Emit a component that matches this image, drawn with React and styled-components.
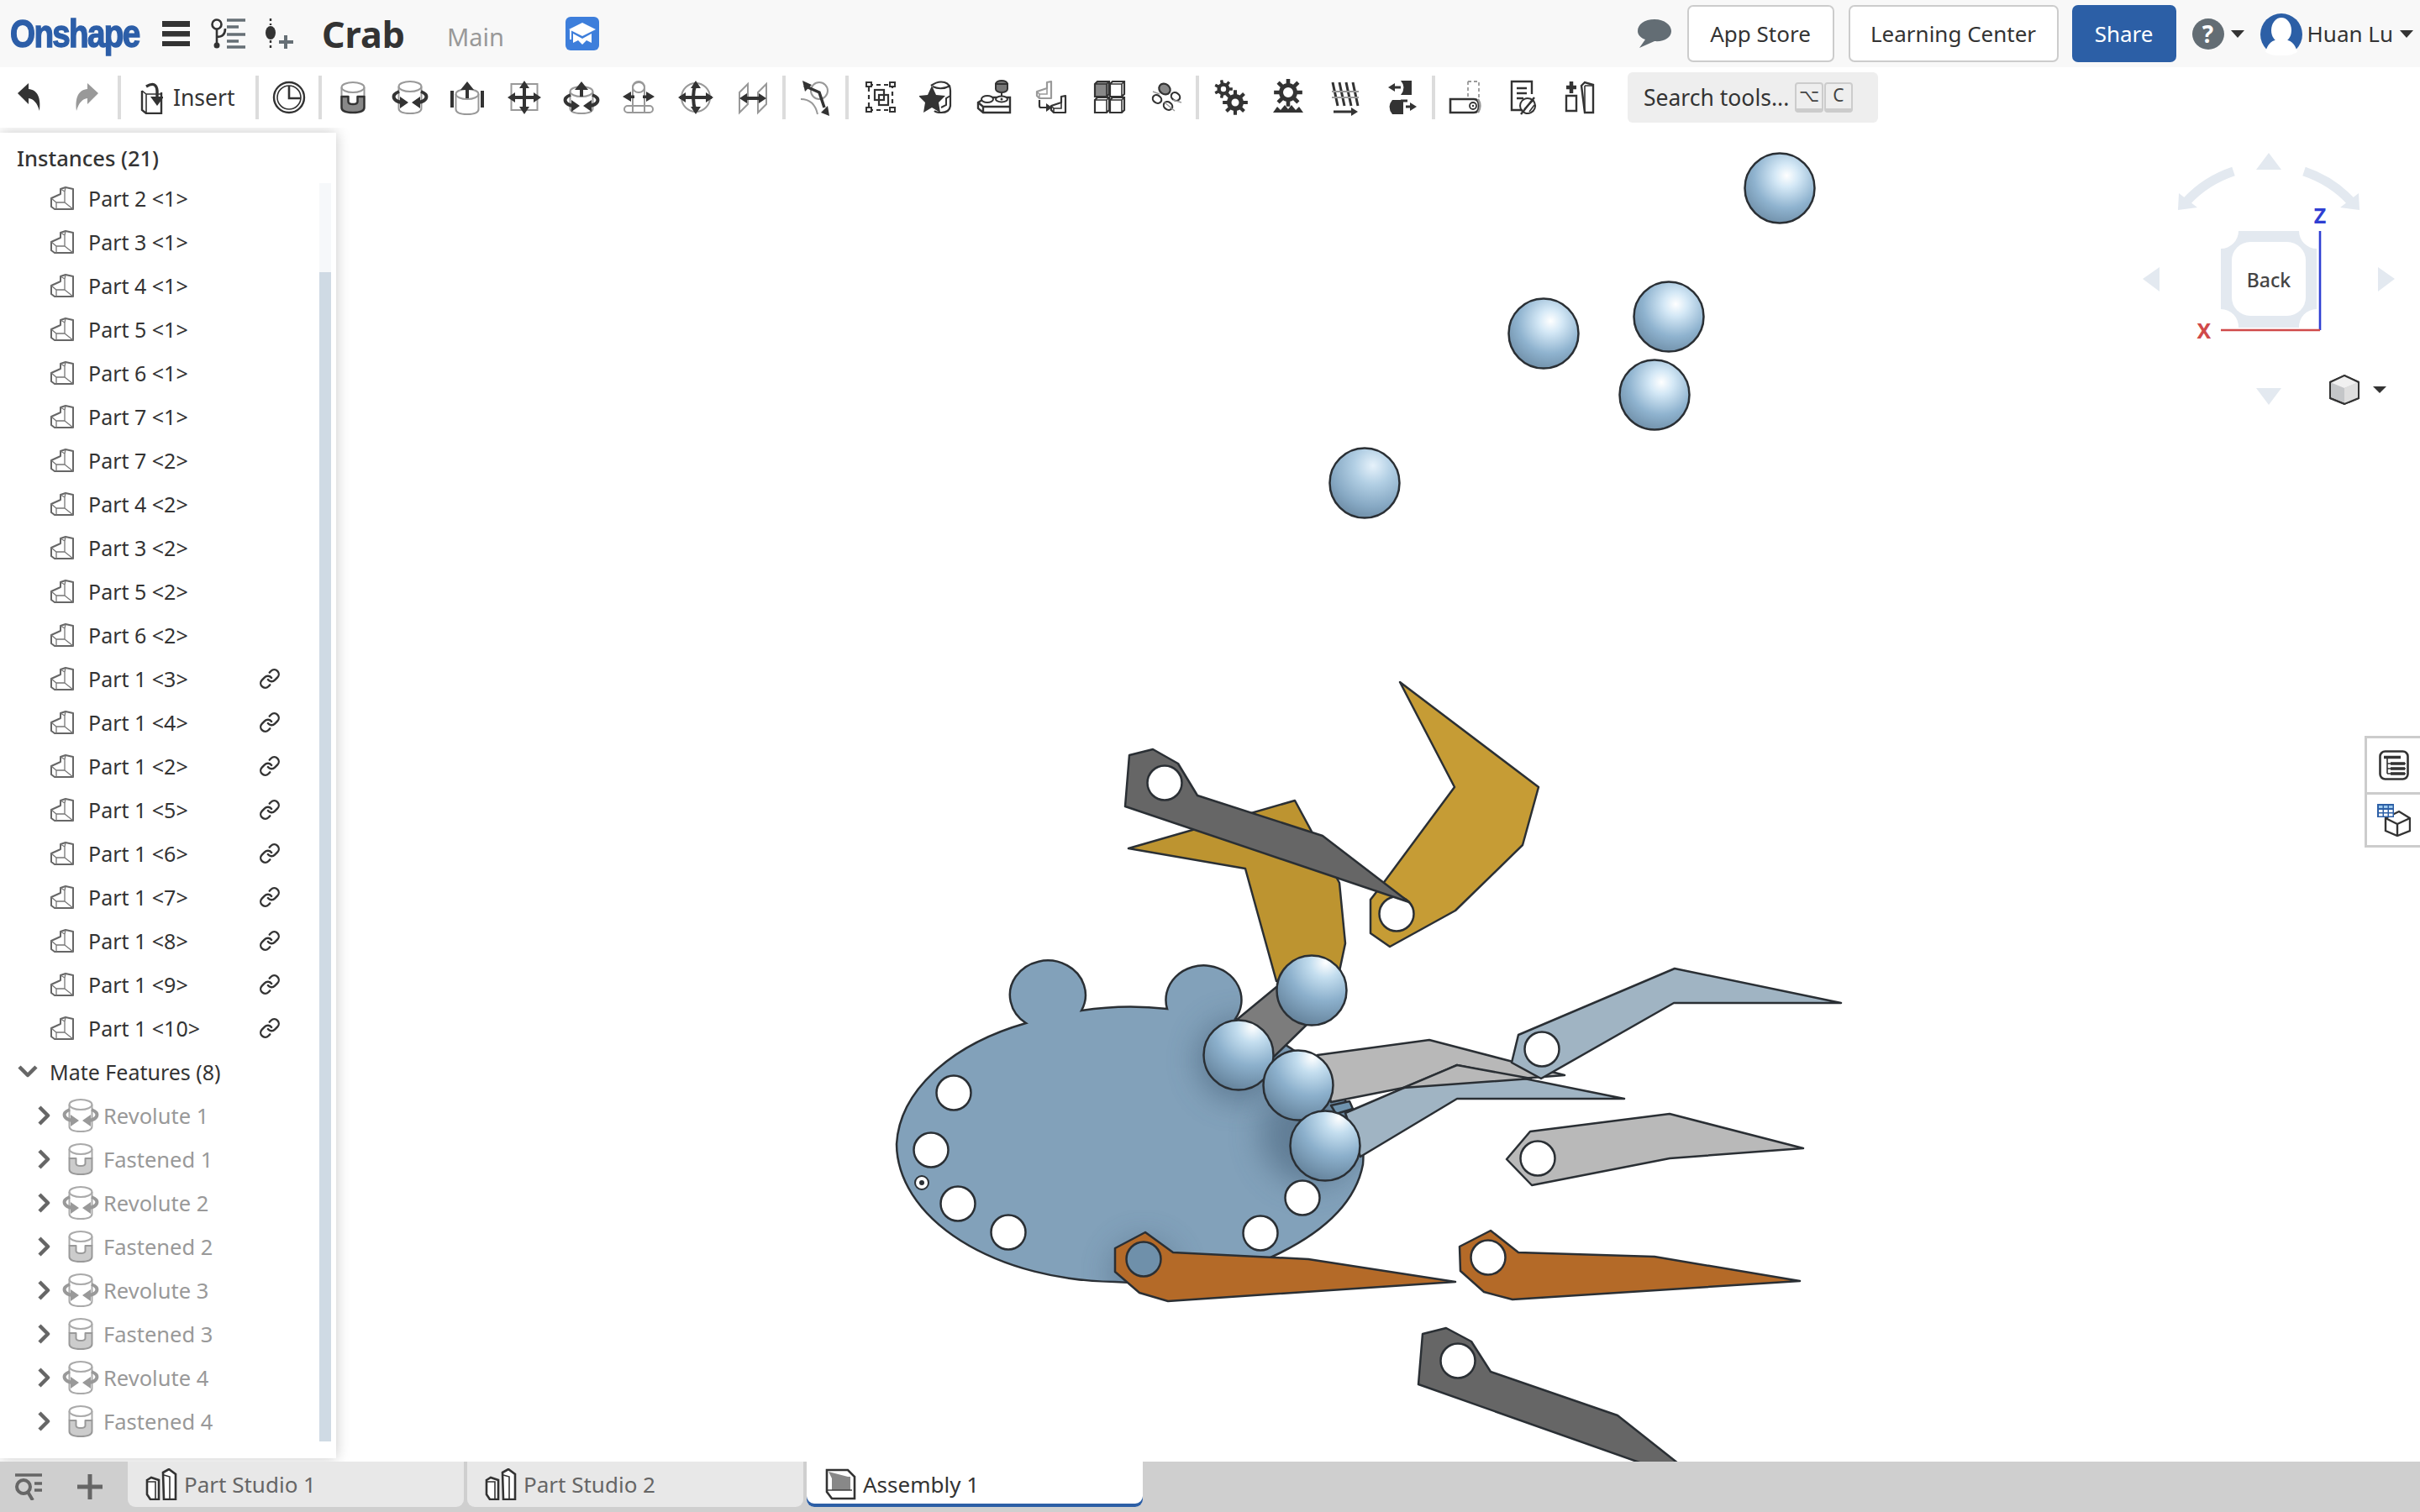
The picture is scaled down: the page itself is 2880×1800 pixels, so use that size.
import React from "react";
import styled, { createGlobalStyle } from "styled-components";
import { Link as LinkIcon } from "lucide-react";

const D = "#333";
const G = "#999";

const Global = createGlobalStyle`
  html, body { margin: 0; padding: 0; background: #fff; }
  body { font-family: "Noto Sans", "Open Sans", Arial, sans-serif; color: #333; overflow: hidden; }
  * { box-sizing: border-box; }
`;

const Page = styled.div`
  width: 2880px;
  height: 1800px;
  display: grid;
  grid-template-rows: 80px 72px 1fr 60px;
  overflow: hidden;
`;

/* ---------- top bar ---------- */
const TopBar = styled.header`
  display: flex;
  align-items: center;
  background: #f8f8f8;
  padding-left: 12px;
`;
const LogoSlot = styled.div`
  width: 158px;
  height: 60px;
  overflow: visible;
  display: flex;
  align-items: center;
`;
const Logo = styled.span`
  font-family: "Liberation Sans", Arial, sans-serif;
  font-weight: 700;
  font-size: 46px;
  letter-spacing: -2px;
  color: #2c5ea8;
  transform: scaleX(0.84);
  transform-origin: left center;
  -webkit-text-stroke: 1.4px #2c5ea8;
  white-space: nowrap;
`;
const IconSlot = styled.span`
  display: inline-flex;
  margin-left: ${(p) => p.$ml || 0}px;
  margin-top: ${(p) => p.$mt || 0}px;
`;
const DocName = styled.div`
  margin-left: 33px;
  font-weight: 700;
  font-size: 43px;
  color: #333;
`;
const Branch = styled.div`
  margin-left: 50px;
  margin-top: 6px;
  font-size: 29px;
  color: #999;
`;
const Spring = styled.div`
  flex: 1;
`;
const EndGap = styled.div`
  flex: 0 0 8px;
`;
const TopButton = styled.button`
  font: inherit;
  font-size: 26px;
  height: 68px;
  width: ${(p) => p.$w}px;
  margin-left: ${(p) => p.$ml}px;
  border-radius: 7px;
  border: 2px solid ${(p) => (p.$primary ? "#2c5fa6" : "#ccc")};
  background: ${(p) => (p.$primary ? "#2c5fa6" : "#fff")};
  color: ${(p) => (p.$primary ? "#fff" : "#333")};
  padding: 0;
  font-family: "Noto Sans", sans-serif;
`;
const Caret = styled.span`
  width: 0;
  height: 0;
  border-left: 8px solid transparent;
  border-right: 8px solid transparent;
  border-top: 9px solid #333;
  margin-left: ${(p) => p.$ml}px;
`;
const HelpCircle = styled.span`
  width: 38px;
  height: 37px;
  margin-left: 19px;
  border-radius: 50%;
  background: #636d74;
  color: #fff;
  font-weight: 700;
  font-size: 28px;
  line-height: 37px;
  text-align: center;
`;
const UserName = styled.span`
  margin-left: 6px;
  font-size: 26px;
  color: #333;
`;

/* ---------- tool bar ---------- */
const ToolBar = styled.div`
  display: flex;
  align-items: center;
  padding-left: 1px;
  background: #fff;
`;
const Tool = styled.div`
  width: 68px;
  height: 52px;
  flex: none;
  display: flex;
  align-items: center;
  justify-content: center;
`;
const InsertTool = styled.div`
  width: 156px;
  flex: none;
  display: flex;
  align-items: center;
  gap: 12px;
  padding-left: 19px;
  font-size: 26.5px;
`;
const Sep = styled.div`
  width: 4px;
  height: 52px;
  background: #dcdcdc;
  flex: none;
  margin: 0 ${(p) => p.$mr ?? 2}px 0 ${(p) => p.$ml ?? 1}px;
`;
const SearchBox = styled.div`
  margin-left: 23px;
  width: 298px;
  height: 60px;
  background: #eee;
  border-radius: 6px;
  display: flex;
  align-items: center;
  padding-left: 19px;
  font-size: 26.5px;
  white-space: nowrap;
`;
const SearchText = styled.span`
  width: 180px;
`;
const Kbd = styled.span`
  width: 34px;
  height: 36px;
  margin-right: 1px;
  border: 2px solid #ccc;
  border-bottom-width: 5px;
  border-radius: 4px;
  font-size: 21px;
  line-height: 27px;
  text-align: center;
  color: #444;
`;

/* ---------- workspace ---------- */
const Workspace = styled.main`
  position: relative;
  overflow: hidden;
  background: #fff;
`;
const Scene = styled.svg`
  position: absolute;
  left: 0;
  top: 0;
`;
const Panel = styled.aside`
  position: relative;
  z-index: 2;
  width: 400px;
  height: 1578px;
  margin-top: 6px;
  background: #fff;
  box-shadow: 0 0 16px rgba(0, 0, 0, 0.22);
`;
const PanelTitle = styled.div`
  height: 52px;
  padding: 8px 0 0 20px;
  display: flex;
  align-items: center;
  font-size: 25.5px;
  font-weight: 500;
  color: #333;
`;
const Scrollbar = styled.div`
  position: absolute;
  right: 6px;
  top: 60px;
  bottom: 20px;
  width: 14px;
  background: #f6f8fa;
`;
const Thumb = styled.div`
  position: absolute;
  left: 0;
  right: 0;
  top: 106px;
  bottom: 0;
  background: #cfdae4;
`;
const PartRow = styled.div`
  height: 52px;
  display: flex;
  align-items: center;
  padding-left: 60px;
  font-size: 25px;
  color: #333;
  white-space: nowrap;
`;
const PartLabel = styled.span`
  margin-left: 17px;
`;
const RowLink = styled.span`
  display: inline-flex;
  margin-left: auto;
  margin-right: 66px;
  color: #333;
`;
const GroupRow = styled.div`
  height: 52px;
  display: flex;
  align-items: center;
  padding-left: 20px;
  font-size: 25px;
`;
const GroupLabel = styled.span`
  margin-left: 13px;
`;
const MateRow = styled.div`
  height: 52px;
  display: flex;
  align-items: center;
  padding-left: 44px;
  font-size: 25.5px;
  color: #999;
`;
const MateLabel = styled.span`
  margin-left: ${(p) => p.$ml || 5}px;
`;
const SideRail = styled.div`
  position: absolute;
  z-index: 2;
  right: 0;
  top: 724px;
  width: 66px;
  height: 133px;
  background: #fff;
  border: 3px solid #ccc;
  border-right: 0;
  display: grid;
  grid-template-rows: 1fr 1fr;
`;
const RailButton = styled.div`
  display: flex;
  align-items: center;
  justify-content: center;
  & + & {
    border-top: 3px solid #ccc;
  }
`;
const NavCube = styled.svg`
  position: absolute;
  z-index: 1;
  left: 2500px;
  top: -2px;
`;

/* ---------- tabs ---------- */
const TabBar = styled.footer`
  background: #cfcfcf;
  display: flex;
  align-items: flex-start;
  position: relative;
  z-index: 3;
`;
const TabTools = styled.div`
  width: 152px;
  height: 60px;
  display: flex;
  align-items: center;
  padding-left: 18px;
  gap: 42px;
`;
const Tab = styled.div`
  width: 400px;
  height: 54px;
  margin-right: 4px;
  display: flex;
  align-items: center;
  padding-left: 21px;
  gap: 8px;
  font-size: 26px;
  border-radius: 0 0 9px 9px;
  background: ${(p) => (p.$active ? "#fff" : "#e8e8e8")};
  color: ${(p) => (p.$active ? "#333" : "#666")};
  box-shadow: ${(p) => (p.$active ? "inset 0 -4px 0 #2c5fa6" : "none")};
`;

/* ---------- helpers for icons ---------- */
const Ic = ({ s = 44, w, h, children }) => (
  <svg width={w || s} height={h || s} viewBox={`0 0 ${w || s} ${h || s}`} fill="none">
    {children}
  </svg>
);

const gearPath = (cx, cy, r1, r2, n, hole) => {
  let d = "";
  const step = (Math.PI * 2) / n;
  for (let i = 0; i < n; i++) {
    const a = i * step;
    const pts = [
      [r1, a - step * 0.5],
      [r1, a - step * 0.27],
      [r2, a - step * 0.17],
      [r2, a + step * 0.17],
      [r1, a + step * 0.27],
    ];
    pts.forEach(([r, t], j) => {
      d += `${i === 0 && j === 0 ? "M" : "L"}${(cx + r * Math.cos(t)).toFixed(2)},${(cy + r * Math.sin(t)).toFixed(2)}`;
    });
  }
  d += `Z M${cx + hole},${cy} a${hole},${hole} 0 1 0 ${-2 * hole},0 a${hole},${hole} 0 1 0 ${2 * hole},0Z`;
  return d;
};

const Arrow4 = ({ cx = 22, cy = 22, r = 19, c = D }) => (
  <g fill={c}>
    <rect x={cx - r + 4} y={cy - 2} width={2 * r - 8} height="4" />
    <rect x={cx - 2} y={cy - r + 4} width="4" height={2 * r - 8} />
    <path d={`M${cx},${cy - r}l6,9h-12z M${cx},${cy + r}l6,-9h-12z M${cx - r},${cy}l9,-6v12z M${cx + r},${cy}l-9,-6v12z`} />
  </g>
);

const Cyl = ({ x = 8.5, y = 10, w = 27, h = 28, ry = 6, c = G }) => (
  <g stroke={c} strokeWidth="2" fill="none">
    <ellipse cx={x + w / 2} cy={y} rx={w / 2} ry={ry} />
    <path d={`M${x},${y}V${y + h}Q${x},${y + h + ry} ${x + w / 2},${y + h + ry}Q${x + w},${y + h + ry} ${x + w},${y + h}V${y}`} />
  </g>
);

const Swirl = ({ y = 20, c = D }) => (
  <g>
    <path d={`M9,${y - 3}Q1,${y} 3,${y + 5}Q5,${y + 9} 12,${y + 10}`} stroke={c} strokeWidth="4" />
    <path d={`M35,${y - 3}Q43,${y} 41,${y + 5}Q39,${y + 9} 32,${y + 10}`} stroke={c} strokeWidth="4" />
    <path d={`M20,${y + 10}l-10,-7v14z M24,${y + 10}l10,-7v14z`} fill={c} />
  </g>
);

const Fastened = ({ c = G, d = D, f = "#888", sw = 2.5 }) => (
  <Ic>
    <ellipse cx="22" cy="10" rx="13.5" ry="6" stroke={c} strokeWidth="2" />
    <path d="M8.5,10V21M35.5,10V21" stroke={c} strokeWidth="2" />
    <path d="M8.5,21h8v6q0,3 5.5,3q5.5,0 5.5,-3v-6h8v13q0,6 -13.5,6q-13.5,0 -13.5,-6z" fill={f} stroke={d} strokeWidth={sw} strokeLinejoin="round" />
  </Ic>
);
const Revolute = ({ c = G, d = D }) => (
  <Ic>
    <Cyl y={9} h={26} c={c} />
    <Swirl y={18} c={d} />
  </Ic>
);
const Slider = () => (
  <Ic>
    <Cyl y={18} h={18} />
    <rect x="2" y="14" width="4" height="20" fill={D} />
    <rect x="38" y="14" width="4" height="20" fill={D} />
    <path d="M22,3l8,10h-6v10h-4v-10h-6z" fill={D} />
  </Ic>
);
const Planar = () => (
  <Ic>
    <rect x="6.5" y="6" width="31" height="31" stroke={G} strokeWidth="2" />
    <Arrow4 cy={22} r={20} />
  </Ic>
);
const Cylindrical = () => (
  <Ic>
    <Cyl y={15} h={20} />
    <path d="M22,3l8,10h-6v8h-4v-8h-6z" fill={D} />
    <Swirl y={22} />
  </Ic>
);
const PinSlot = () => (
  <Ic>
    <path d="M15,39V10a7,7 0 0 1 14,0V39" stroke={G} strokeWidth="2" />
    <ellipse cx="22" cy="10" rx="7" ry="6" stroke={G} strokeWidth="2" />
    <rect x="5" y="32" width="34" height="8" rx="4" stroke={G} strokeWidth="2" />
    <path d="M3,21l10,-6v12z M41,21l-10,-6v12z" fill={D} />
    <rect x="11" y="19.5" width="6" height="3.5" fill={D} />
    <rect x="27" y="19.5" width="6" height="3.5" fill={D} />
  </Ic>
);
const Ball = () => (
  <Ic>
    <circle cx="22" cy="22" r="17" stroke={G} strokeWidth="2" />
    <path d="M3,22h38" stroke={D} strokeWidth="4" />
    <path d="M22,5Q16,22 22,39" stroke={D} strokeWidth="4" />
    <path d="M22,2l6,9h-12z M22,42l6,-9h-12z M1,22l9,-6v12z M43,22l-9,-6v12z" fill={D} />
  </Ic>
);
const Parallel = () => (
  <Ic>
    <path d="M6,16L16,6V30L6,40Z M28,16L38,6V30L28,40Z" stroke={G} strokeWidth="2" />
    <path d="M10,23h24" stroke={D} strokeWidth="4" />
    <path d="M6,23l9,-6v12z M38,23l-9,-6v12z" fill={D} />
  </Ic>
);
const Tangent = () => (
  <Ic>
    <circle cx="26" cy="14" r="10" stroke={G} strokeWidth="2" />
    <path d="M4,24Q20,24 24,42" stroke={G} strokeWidth="2" />
    <path d="M8,8L26,16 L32,34" stroke={D} strokeWidth="3.5" />
    <path d="M6,2l11,5l-8,8z M28,40l8,-8 l2,12z" fill={D} />
  </Ic>
);
const GroupIc = () => (
  <Ic>
    <path d="M8,7H36V37H8Z" stroke={D} strokeWidth="2.2" strokeDasharray="5 4" />
    <rect x="5" y="4" width="6" height="5" fill="#fff" stroke={D} strokeWidth="2" />
    <rect x="33" y="4" width="6" height="5" fill="#fff" stroke={D} strokeWidth="2" />
    <rect x="5" y="34" width="6" height="5" fill="#fff" stroke={D} strokeWidth="2" />
    <rect x="33" y="34" width="6" height="5" fill="#fff" stroke={D} strokeWidth="2" />
    <rect x="15" y="13" width="11" height="12" stroke={D} strokeWidth="2.2" />
    <rect x="20" y="19" width="11" height="12" fill="none" stroke={D} strokeWidth="2.2" />
  </Ic>
);
const StarIc = () => (
  <Ic>
    <path d="M14,8Q22,2 30,4Q37,6 37,14V32Q36,40 26,40Q20,40 18,38" stroke={D} strokeWidth="2.2" />
    <path d="M16,9Q26,14 37,8" stroke={D} strokeWidth="2" />
    <path d="M26,34l6,-3v-8l5,-3" stroke={D} strokeWidth="2" />
    <path d="M15,8l5,11l11,1l-8,8l2,12l-10,-6l-10,6l2,-12l-8,-8l11,-1z" fill={D} />
  </Ic>
);
const LegoIc = () => (
  <Ic>
    <ellipse cx="30" cy="6" rx="7" ry="4" fill="#777" stroke={D} strokeWidth="2" />
    <path d="M23,6v6a7,4 0 0 0 14,0v-6z" fill="#777" stroke={D} strokeWidth="2" />
    <path d="M30,16v6" stroke={D} strokeWidth="2" />
    <path d="M2,28L12,22H40V40H8L2,35Z" fill="#fff" stroke={D} strokeWidth="2.4" />
    <path d="M2,28L8,33H40M8,33V40" stroke={D} strokeWidth="2.4" />
    <ellipse cx="13" cy="24" rx="7" ry="4" fill="#fff" stroke={D} strokeWidth="2" />
    <ellipse cx="30" cy="24" rx="7" ry="3.5" fill="#fff" stroke={D} strokeWidth="2" />
    <circle cx="30" cy="24" r="1.5" fill={D} />
  </Ic>
);
const LPart = ({ x, y, c, f = "#fff" }) => (
  <g transform={`translate(${x} ${y})`}>
    <path d="M0,12L12,8V1L17,0V20H3L0,17Z" fill={f} stroke={c} strokeWidth="2.2" strokeLinejoin="round" />
    <path d="M0,12L3,15H12V8M3,15V20" stroke={c} strokeWidth="1.6" />
  </g>
);
const TransformIc = () => (
  <Ic>
    <LPart x={4} y={3} c={G} />
    <LPart x={21} y={20} c={D} />
    <path d="M7,25v7q0,2 2,2h8" stroke={D} strokeWidth="2.2" />
    <path d="M22,34l-7,-5v10z" fill={D} />
  </Ic>
);
const ReplicateIc = () => (
  <Ic>
    {[[5, 3, "#888"], [23, 3, "#fff"], [5, 22, "#fff"], [23, 22, "#fff"]].map(([x, y, f]) => (
      <g key={`${x}${y}`}>
        <path d={`M${x},${y + 3}l3,-3h14v15l-3,3h-14z`} fill={f} stroke={D} strokeWidth="2.2" />
        <path d={`M${x},${y + 3}h14v15M${x + 14},${y + 3}l3,-3`} stroke={D} strokeWidth="1.6" />
      </g>
    ))}
  </Ic>
);
const PatternIc = () => (
  <Ic>
    <ellipse cx="20" cy="12" rx="7" ry="6" fill="#888" stroke={D} strokeWidth="2.2" transform="rotate(35 20 12)" />
    <ellipse cx="33" cy="21" rx="5.5" ry="4.5" stroke={D} strokeWidth="2.2" transform="rotate(35 33 21)" />
    <ellipse cx="11" cy="24" rx="5.5" ry="4.5" stroke={D} strokeWidth="2.2" transform="rotate(35 11 24)" />
    <ellipse cx="24" cy="32" rx="5.5" ry="4.5" stroke={D} strokeWidth="2.2" transform="rotate(35 24 32)" />
    <path d="M14,18L6,15M40,28L30,25M32,38L20,28" stroke={G} strokeWidth="1.4" />
  </Ic>
);
const GearsIc = () => (
  <Ic>
    <path d={gearPath(13, 12, 7.5, 11, 7, 3.2)} fill={D} fillRule="evenodd" />
    <path d={gearPath(27, 28, 10, 15, 8, 4.5)} fill={D} fillRule="evenodd" />
  </Ic>
);
const GearBaseIc = () => (
  <Ic>
    <path d={gearPath(22, 16, 11, 17, 8, 6)} fill={D} fillRule="evenodd" />
    <path d="M4,40l5,-7l4,4l5,-6l4,5l4,-5l5,6l4,-4l5,7z" fill={D} />
  </Ic>
);
const HelixIc = () => (
  <Ic>
    {[7, 15, 23, 31].map((x) => (
      <path key={x} d={`M${x},4L${x + 6},32`} stroke={D} strokeWidth="3" />
    ))}
    <path d="M6,15H38M6,22H38" stroke={G} strokeWidth="1.8" />
    <path d="M8,39H30" stroke={D} strokeWidth="3" />
    <path d="M37,39l-8,-5v10z" fill={D} />
  </Ic>
);
const PullIc = () => (
  <Ic>
    <path d="M20,2H33V19H20Q27,10 20,2Z" fill={D} />
    <path d="M12,10h8M20,26h8" stroke={D} strokeWidth="3" />
    <path d="M5,10l8,-5v10z" fill={D} />
    <path d="M10,25H23V42H10Q3,33 10,25Z" fill={D} />
    <path d="M26,33h8" stroke={D} strokeWidth="3" />
    <path d="M39,33l-8,-5v10z" fill={D} />
  </Ic>
);
const ExplodeIc = () => (
  <Ic>
    <path d="M25,3H38V30" stroke={G} strokeWidth="1.8" strokeDasharray="4 3" />
    <path d="M25,3V26" stroke={G} strokeWidth="1.8" strokeDasharray="4 3" />
    <path d="M4,24H32Q38,24 38,32Q38,40 32,40H4Z" fill="#fff" stroke={D} strokeWidth="2.6" />
    <path d="M37,24Q42,32 37,40" stroke={G} strokeWidth="2.4" />
    <circle cx="31" cy="32" r="4" stroke={D} strokeWidth="1.8" />
    <circle cx="31" cy="32" r="1.2" fill={D} />
  </Ic>
);
const NotesIc = () => (
  <Ic>
    <path d="M22,37H9V3H33V18" stroke={D} strokeWidth="2.4" />
    <path d="M15,11h12M15,17h12M15,23h8" stroke={D} strokeWidth="2.4" />
    <circle cx="28" cy="32" r="9" stroke={D} strokeWidth="2" transform="rotate(20 28 32)" />
    <path d="M20,42L36,22" stroke={D} strokeWidth="2.4" />
    <path d="M24,36l10,-10M30,39l6,-8" stroke={D} strokeWidth="1.6" />
  </Ic>
);
const NewStudioIc = () => (
  <Ic>
    <path d="M6,20V38H18V20Z" fill="#fff" stroke={D} strokeWidth="2.4" />
    <path d="M24,8l4,-4l10,3V40H28Z" fill="#fff" stroke={D} strokeWidth="2.4" />
    <path d="M28,8H38M28,8V40" stroke={D} strokeWidth="1.6" />
    <path d="M6,10h12M12,3v14" stroke={D} strokeWidth="4.5" />
  </Ic>
);
const Studio = () => (
  <svg width="38" height="38" viewBox="0 0 38 38" fill="none">
    <path d="M2,14l5,-3l9,3V37H6L2,31Z" fill="#fff" stroke={D} strokeWidth="2.6" />
    <path d="M21,5l7,-4l8,6V37H22Z" fill="#fff" stroke={D} strokeWidth="2.6" />
    <path d="M2,16h10V37M22,8l7,2V37" stroke={D} strokeWidth="1.6" />
  </svg>
);
const AssemblyTab = () => (
  <svg width="38" height="38" viewBox="0 0 38 38" fill="none">
    <path d="M3,2H28L36,10V36H9L3,28Z" fill="#fff" stroke={D} strokeWidth="2.6" />
    <path d="M5,4L9,12V26H31V10H28Z" fill="#888" />
    <path d="M3,26H33" stroke={D} strokeWidth="1.4" />
  </svg>
);
const PartIc = () => (
  <svg width="28" height="28" viewBox="0 0 28 28" fill="none">
    <path d="M1,14L12,9V3L18,1L27,3V27H5L1,24Z" fill="#fff" stroke="#666" strokeWidth="2" strokeLinejoin="round" />
    <path d="M1,14L7,19H17V6L12,3M17,6L18,1M7,19V27M17,19L27,27" stroke="#777" strokeWidth="1.3" />
  </svg>
);
const Chevron = ({ open }) => (
  <svg width={open ? 26 : 16} height={open ? 26 : 26} viewBox={open ? "0 0 26 26" : "0 0 16 26"} fill="none">
    <path d={open ? "M3,7L13,17L23,7" : "M3,3L13,13L3,23"} stroke="#666" strokeWidth="4.5" strokeLinejoin="round" />
  </svg>
);

const toolsA = [Fastened, Revolute, Slider, Planar, Cylindrical, PinSlot, Ball, Parallel];
const toolsB = [GroupIc, StarIc, LegoIc, TransformIc, ReplicateIc, PatternIc];
const toolsC = [GearsIc, GearBaseIc, HelixIc, PullIc];
const toolsD = [ExplodeIc, NotesIc, NewStudioIc];

const parts = [
  "Part 2 <1>", "Part 3 <1>", "Part 4 <1>", "Part 5 <1>", "Part 6 <1>", "Part 7 <1>", "Part 7 <2>",
  "Part 4 <2>", "Part 3 <2>", "Part 5 <2>", "Part 6 <2>",
];
const linked = ["Part 1 <3>", "Part 1 <4>", "Part 1 <2>", "Part 1 <5>", "Part 1 <6>", "Part 1 <7>", "Part 1 <8>", "Part 1 <9>", "Part 1 <10>"];
const mates = ["Revolute 1", "Fastened 1", "Revolute 2", "Fastened 2", "Revolute 3", "Fastened 3", "Revolute 4", "Fastened 4"];

/* ---------- 3D scene ---------- */
const BLUE = "#82a1ba";
const EDGE = "#2a2f34";
const arms = [
  { f: "#bd9430", p: "1343,1010 1541,953 1594,1051 1601,1123 1590,1175 1519,1168 1482,1034" },
  { f: "#7c7c7c", p: "1473,1213 1519,1175 1557,1218 1516,1258" },
  { f: "#b8b8b8", p: "1568,1256 1701,1238 1862,1280 1670,1295 1584,1312" },
  { f: "#6f93ad", p: "1584,1316 1606,1311 1610,1320 1590,1326" },
  { f: "#a0b4c3", p: "1601,1325 1734,1268 1933,1308 1734,1308 1619,1377" },
  { f: "#b8b8b8", p: "1670,1295 1734,1268 1822,1284" },
  { f: "#a0b4c3", p: "1993,1153 2191,1194 1992,1194 1834,1284 1799,1265 1807,1232", h: [1835, 1249] },
  { f: "#c69c35", p: "1666,812 1831,937 1812,1006 1732,1084 1654,1127 1631,1111 1631,1071 1648,1049 1731,937", h: [1662, 1088] },
  { f: "#666", p: "1372,892 1402,909 1425,947 1574,995 1677,1074 1339,960 1344,899", h: [1386, 932] },
  { f: "#b46a28", p: "1363,1467 1396,1491 1557,1499 1732,1526 1390,1549 1356,1539 1327,1514 1327,1486", h: [1361, 1499], hf: "#6f90aa" },
  { f: "#b46a28", p: "1774,1465 1807,1491 1969,1496 2142,1525 1800,1547 1766,1538 1738,1513 1737,1484", h: [1771, 1497] },
  { f: "#b9b9b9", p: "1987,1326 2146,1367 1987,1379 1823,1411 1793,1380 1821,1347", h: [1830, 1379] },
  { f: "#666", p: "1721,1581 1751,1597 1774,1633 1925,1685 1997,1742 1954,1742 1688,1648 1693,1588", h: [1735, 1620] },
];
const bodyPath =
  "M1221,1218A45,41 0 1 1 1287,1203Q1338,1195 1389,1201A45,41 0 1 1 1470,1213C1570,1255 1628,1320 1622,1386C1612,1440 1560,1475 1512,1497C1450,1522 1390,1530 1327,1526A265,165 0 0 1 1067,1362A265,165 0 0 1 1221,1218Z";
const bodyHoles = [[1135, 1301], [1108, 1369], [1140, 1433], [1200, 1467], [1500, 1468], [1550, 1426]];
const spheres = [
  [2118, 224, "sphereA"], [1837, 397, "sphereA"], [1986, 377, "sphereA"], [1969, 470, "sphereA"], [1624, 575, "sphereC"],
  [1561, 1179, "sphereB"], [1474, 1256, "sphereB"], [1545, 1292, "sphereB"], [1577, 1364, "sphereB"],
];

const CrabScene = () => (
  <Scene width="2880" height="1588" viewBox="0 152 2880 1588">
    <defs>
      <radialGradient id="sphereA" cx="0.6" cy="0.32" r="0.85" fx="0.6" fy="0.32">
        <stop offset="0" stopColor="#ffffff" />
        <stop offset="0.2" stopColor="#d4e8f6" />
        <stop offset="0.55" stopColor="#8fb3cf" />
        <stop offset="1" stopColor="#5f7c94" />
      </radialGradient>
      <radialGradient id="sphereC" cx="0.62" cy="0.25" r="0.9" fx="0.62" fy="0.25">
        <stop offset="0" stopColor="#e6f2fb" />
        <stop offset="0.3" stopColor="#b2cfe4" />
        <stop offset="0.65" stopColor="#87a9c4" />
        <stop offset="1" stopColor="#607d95" />
      </radialGradient>
      <radialGradient id="sphereB" cx="0.7" cy="0.1" r="1" fx="0.7" fy="0.1">
        <stop offset="0" stopColor="#ffffff" />
        <stop offset="0.22" stopColor="#c4deef" />
        <stop offset="0.55" stopColor="#8cb0cc" />
        <stop offset="1" stopColor="#5f7c94" />
      </radialGradient>
      <clipPath id="bodyClip">
        <path d={bodyPath} />
      </clipPath>
      <filter id="soft" x="-50%" y="-50%" width="200%" height="200%">
        <feGaussianBlur stdDeviation="18" />
      </filter>
    </defs>
    <path d={bodyPath} fill={BLUE} stroke={EDGE} strokeWidth="2.5" />
    <g clipPath="url(#bodyClip)">
      <circle cx="1474" cy="1262" r="48" fill="#3f5a72" opacity="0.55" filter="url(#soft)" />
      <circle cx="1560" cy="1350" r="60" fill="#3f5a72" opacity="0.5" filter="url(#soft)" />
      <circle cx="1361" cy="1515" r="40" fill="#3f5a72" opacity="0.4" filter="url(#soft)" />
    </g>
    {bodyHoles.map(([x, y]) => (
      <circle key={x} cx={x} cy={y} r="20.5" fill="#fff" stroke={EDGE} strokeWidth="2.5" />
    ))}
    <circle cx="1097" cy="1408" r="8" fill="#fff" stroke={EDGE} strokeWidth="2" />
    <circle cx="1097" cy="1408" r="3" fill={EDGE} />
    {arms.map((a) => (
      <g key={a.p}>
        <polygon points={a.p} fill={a.f} stroke={EDGE} strokeWidth="2.5" strokeLinejoin="round" />
        {a.h && <circle cx={a.h[0]} cy={a.h[1]} r="20.5" fill={a.hf || "#fff"} stroke={EDGE} strokeWidth="2.5" />}
      </g>
    ))}
    {spheres.map(([x, y, g]) => (
      <circle key={x} cx={x} cy={y} r="41.5" fill={`url(#${g})`} stroke={EDGE} strokeWidth="2.5" />
    ))}
  </Scene>
);

const Cube = () => (
  <NavCube width="380" height="360" viewBox="0 0 380 360" fill="none">
    <g fill="#e3e9f0">
      <path d="M200,32L185,52H215Z M200,332L185,312H215Z M50,182L70,168V197Z M350,182L330,168V197Z" />
      <path d="M93,80L92,100L115,97Z M307,80L308,100L285,97Z" />
      <path d="M164,125H236A21,21 0 0 0 257,146V218A21,21 0 0 0 236,240H164A21,21 0 0 0 143,218V146A21,21 0 0 0 164,125Z" />
    </g>
    <path d="M158,54Q125,65 102,90 M242,54Q275,65 298,90" stroke="#e3e9f0" strokeWidth="11" />
    <rect x="156" y="138" width="88" height="88" rx="22" fill="#fff" />
    <text x="200" y="192" textAnchor="middle" fontFamily="Noto Sans, sans-serif" fontWeight="500" fontSize="23" fill="#444">Back</text>
    <path d="M261,125V243" stroke="#2f3fd2" strokeWidth="2.6" />
    <path d="M143,243H261" stroke="#d04a4a" strokeWidth="2.6" />
    <text x="261" y="116" textAnchor="middle" fontFamily="Noto Sans, sans-serif" fontWeight="700" fontSize="25" fill="#2f3fd2">Z</text>
    <text x="123" y="253" textAnchor="middle" fontFamily="Noto Sans, sans-serif" fontWeight="700" fontSize="25" fill="#d04a4a">X</text>
    <path d="M290,297L307,305V324L290,331L273,324V305Z" fill="#c4c6c8" stroke={D} strokeWidth="2" />
    <path d="M273,305L290,312L307,305L290,297Z" fill="#f0f0f0" />
    <path d="M290,312V331L307,324V305Z" fill="#dedede" />
    <path d="M273,305L290,297L307,305V324L290,331L273,324Z" stroke={D} strokeWidth="2" />
    <path d="M324,310H340L332,318Z" fill={D} />
  </NavCube>
);

export default function App() {
  return (
    <Page>
      <Global />
      <TopBar>
        <LogoSlot><Logo>Onshape</Logo></LogoSlot>
        <IconSlot $ml={23}>
          <svg width="33" height="30" viewBox="0 0 33 30"><path d="M0,0H33V7H0Z M0,12H33V18.5H0Z M0,24H33V30H0Z" fill={D} /></svg>
        </IconSlot>
        <IconSlot $ml={24}>
          <svg width="42" height="36" viewBox="0 0 42 36" fill="none">
            <circle cx="8" cy="7" r="5.5" stroke={D} strokeWidth="2.6" />
            <path d="M8,12V32M8,22Q18,22 18,12" stroke={D} strokeWidth="2.6" />
            <circle cx="8" cy="32" r="3.5" fill={D} />
            <path d="M20,2H42M20,10H34M20,19H42M20,27H34M20,34H42" stroke="#666f75" strokeWidth="3.4" />
          </svg>
        </IconSlot>
        <IconSlot $ml={24}>
          <svg width="34" height="36" viewBox="0 0 34 36" fill="none">
            <path d="M6,0V8M6,26V36" stroke={D} strokeWidth="2.4" strokeDasharray="3 3" />
            <ellipse cx="6" cy="17" rx="6" ry="8" fill={D} />
            <path d="M24,20V36M16,28H33" stroke="#666f75" strokeWidth="4" />
          </svg>
        </IconSlot>
        <DocName>Crab</DocName>
        <Branch>Main</Branch>
        <IconSlot $ml={73}>
          <svg width="40" height="40" viewBox="0 0 40 40">
            <rect width="40" height="40" rx="6" fill="#3d7edb" />
            <path d="M20,7L36,15L20,23L4,15Z" fill="#fff" />
            <path d="M9,20V31L15,28L20,33L25,28L31,31V20L20,26Z" fill="#fff" />
            <path d="M6,16V27" stroke="#fff" strokeWidth="2" />
          </svg>
        </IconSlot>
        <Spring />
        <svg width="40" height="34" viewBox="0 0 40 34"><path d="M20,0C32,0 40,7 40,14C40,22 31,27 20,26L2,34L9,24C3,22 0,18 0,14C0,6 8,0 20,0Z" fill="#636d74" /></svg>
        <TopButton $w={175} $ml={19}>App Store</TopButton>
        <TopButton $w={250} $ml={17}>Learning Center</TopButton>
        <TopButton $w={124} $ml={16} $primary>Share</TopButton>
        <HelpCircle>?</HelpCircle>
        <Caret $ml={8} />
        <IconSlot $ml={19} $mt={2}>
          <svg width="50" height="50" viewBox="0 0 50 50">
            <circle cx="25" cy="25" r="25" fill="#2c5fa6" />
            <ellipse cx="25" cy="20" rx="12" ry="15" fill="#fff" />
            <path d="M6,46Q10,30 25,31Q40,30 44,46Q36,51 25,50Q14,51 6,46Z" fill="#fff" />
          </svg>
        </IconSlot>
        <UserName>Huan Lu</UserName>
        <Caret $ml={8} />
        <EndGap />
      </TopBar>

      <ToolBar>
        <Tool>
          <Ic w={30} h={36}><path d="M1,13L14,1V8C24,9 29,17 27,34C24,24 20,20 14,19V26Z" fill={D} /></Ic>
        </Tool>
        <Tool>
          <Ic w={30} h={36}><path d="M29,13L16,1V8C6,9 1,17 3,34C6,24 10,20 16,19V26Z" fill="#999" /></Ic>
        </Tool>
        <Sep $ml={3} $mr={3} />
        <InsertTool>
          <Ic w={28} h={40}>
            <path d="M3,12V35L8,39H26V14" stroke={D} strokeWidth="2.4" fill="#fff" />
            <path d="M3,12L8,16H26M8,16V39" stroke={D} strokeWidth="1.6" />
            <path d="M8,7Q20,0 21,12V20" stroke={D} strokeWidth="3.4" />
            <path d="M21,30l-8,-11h16z" fill={D} />
          </Ic>
          Insert
        </InsertTool>
        <Sep $ml={1} $mr={2} />
        <Tool>
          <Ic>
            <circle cx="22" cy="22" r="18" stroke={D} strokeWidth="2.4" />
            <circle cx="22" cy="22" r="14" stroke={D} strokeWidth="1.6" />
            <path d="M22,8V23H36" stroke={D} strokeWidth="2.6" />
          </Ic>
        </Tool>
        <Sep $ml={1} $mr={3} />
        {toolsA.map((T, i) => <Tool key={i}><T /></Tool>)}
        <Sep />
        <Tool><Tangent /></Tool>
        <Sep $mr={4} />
        {toolsB.map((T, i) => <Tool key={i}><T /></Tool>)}
        <Sep $ml={1} $mr={4} />
        {toolsC.map((T, i) => <Tool key={i}><T /></Tool>)}
        <Sep />
        {toolsD.map((T, i) => <Tool key={i}><T /></Tool>)}
        <SearchBox>
          <SearchText>Search tools...</SearchText>
          <Kbd>⌥</Kbd>
          <Kbd>C</Kbd>
        </SearchBox>
      </ToolBar>

      <Workspace>
        <CrabScene />
        <Cube />
        <Panel>
          <PanelTitle>Instances (21)</PanelTitle>
          <Scrollbar><Thumb /></Scrollbar>
          {parts.map((p) => (
            <PartRow key={p}><PartIc /><PartLabel>{p}</PartLabel></PartRow>
          ))}
          {linked.map((p) => (
            <PartRow key={p}>
              <PartIc /><PartLabel>{p}</PartLabel>
              <RowLink><LinkIcon size={26} strokeWidth={2.2} /></RowLink>
            </PartRow>
          ))}
          <GroupRow><Chevron open /><GroupLabel>Mate Features (8)</GroupLabel></GroupRow>
          {mates.map((m, i) => (
            <MateRow key={m}>
              <Chevron />
              <IconSlot $ml={14}>
                {i % 2 === 0 ? <Revolute c="#aaa" d="#999" /> : <Fastened c="#aaa" d="#999" f="#ccc" sw={2} />}
              </IconSlot>
              <MateLabel>{m}</MateLabel>
            </MateRow>
          ))}
        </Panel>
        <SideRail>
          <RailButton>
            <svg width="36" height="36" viewBox="0 0 36 36" fill="none">
              <rect x="1.5" y="1.5" width="33" height="33" rx="6" stroke={D} strokeWidth="2.6" />
              <path d="M10,8.5V28M10,16H32M10,22H32M10,28H32" stroke={D} strokeWidth="1.6" />
              <path d="M6,8.5H26M14,16H31M14,22H31M14,28H31" stroke={D} strokeWidth="3.4" />
            </svg>
          </RailButton>
          <RailButton>
            <svg width="40" height="40" viewBox="0 0 40 40" fill="none">
              <path d="M10,18L26,10L39,18V33L24,39L10,33Z" stroke={D} strokeWidth="2.4" fill="#fff" />
              <path d="M10,18L24,25L39,18M24,25V39" stroke={D} strokeWidth="2.4" />
              <rect x="0" y="1" width="20" height="16" fill="#2c5fa6" />
              <path d="M2,3h4.5v3H2Z M8,3h4.5v3H8Z M14,3h4.5v3H14Z" fill="#9cc9ee" />
              <path d="M2,8h4.5v3H2Z M8,8h4.5v3H8Z M14,8h4.5v3H14Z M2,12.5h4.5v3H2Z M8,12.5h4.5v3H8Z M14,12.5h4.5v3H14Z" fill="#fff" />
            </svg>
          </RailButton>
        </SideRail>
      </Workspace>

      <TabBar>
        <TabTools>
          <svg width="32" height="32" viewBox="0 0 32 32" fill="none">
            <path d="M0,2H32" stroke="#666" strokeWidth="3.5" />
            <circle cx="10" cy="16" r="8" stroke="#666" strokeWidth="4" />
            <path d="M15,22L21,32" stroke="#666" strokeWidth="4" />
            <path d="M23,12H32M23,20H32" stroke="#666" strokeWidth="3.5" />
          </svg>
          <svg width="30" height="30" viewBox="0 0 30 30"><path d="M12.5,0h5v12.5H30v5H17.5V30h-5V17.5H0v-5h12.5Z" fill="#666" /></svg>
        </TabTools>
        <Tab><Studio />Part Studio 1</Tab>
        <Tab><Studio />Part Studio 2</Tab>
        <Tab $active><AssemblyTab />Assembly 1</Tab>
      </TabBar>
    </Page>
  );
}
